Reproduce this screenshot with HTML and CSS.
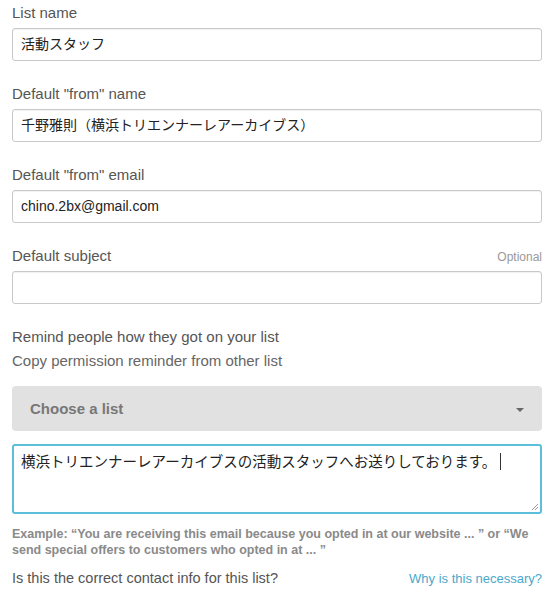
FILE: index.html
```html
<!DOCTYPE html>
<html lang="ja">
<head>
<meta charset="utf-8">
<link rel="stylesheet" href="styles.css">
</head>
<body>
<form class="form">
  <div class="field">
    <div class="label-row"><label class="label">List name</label></div>
    <div class="input">活動スタッフ</div>
  </div>
  <div class="field">
    <div class="label-row"><label class="label">Default "from" name</label></div>
    <div class="input">千野雅則（横浜トリエンナーレアーカイブス）</div>
  </div>
  <div class="field">
    <div class="label-row"><label class="label">Default "from" email</label></div>
    <div class="input">chino.2bx@gmail.com</div>
  </div>
  <div class="field">
    <div class="label-row"><label class="label">Default subject</label><span class="optional">Optional</span></div>
    <div class="input"></div>
  </div>
  <div class="remind">
    <div class="remind-title">Remind people how they got on your list</div>
    <div class="remind-sub">Copy permission reminder from other list</div>
    <div class="select"><span>Choose a list</span><span class="caret"></span></div>
    <div class="textarea">横浜トリエンナーレアーカイブスの活動スタッフへお送りしております。<span class="cursor"></span>
      <svg class="grip" width="8" height="8" viewBox="0 0 8 8"><path d="M7 1L1 7M7 4L4 7" stroke="#999" stroke-width="1" fill="none"/></svg>
    </div>
    <p class="example">Example: “You are receiving this email because you opted in at our website ... ” or “We send special offers to customers who opted in at ... ”</p>
  </div>
  <div class="contact">
    <span class="contact-q">Is this the correct contact info for this list?</span>
    <a class="why">Why is this necessary?</a>
  </div>
</form>
</body>
</html>
```

FILE: styles.css
```css
* { box-sizing: border-box; }
html, body { margin: 0; padding: 0; background: #fff; }
body {
  font-family: "Liberation Sans", Arial, "Noto Sans CJK JP", sans-serif;
  color: #555;
}
.form {
  width: 530px;
  margin-left: 12px;
  padding-top: 5px;
}
.field { margin-bottom: 25px; }
.label-row {
  display: flex;
  justify-content: space-between;
  align-items: baseline;
  height: 16px;
  margin-bottom: 7px;
}
.label {
  font-size: 15px;
  line-height: 16px;
  color: #555;
}
.optional {
  font-size: 12px;
  color: #999;
}
.input {
  height: 33px;
  border: 1px solid #c9c9c9;
  border-radius: 3px;
  box-shadow: inset 0 1px 1px rgba(0,0,0,0.06);
  padding: 0 8px;
  font-size: 14px;
  line-height: 31px;
  color: #222;
  white-space: nowrap;
  overflow: hidden;
}
.remind-title {
  font-size: 15px;
  line-height: 16px;
  color: #555;
}
.remind-sub {
  margin-top: 8px;
  font-size: 15px;
  line-height: 16px;
  color: #666;
}
.select {
  margin-top: 17px;
  height: 45px;
  background: #e1e1e1;
  border-radius: 4px;
  display: flex;
  align-items: center;
  justify-content: space-between;
  padding: 0 18px;
  font-size: 15px;
  font-weight: bold;
  color: #777;
}
.caret {
  width: 0;
  height: 0;
  border-left: 4px solid transparent;
  border-right: 4px solid transparent;
  border-top: 4px solid #666;
  margin-top: 2px;
}
.textarea {
  position: relative;
  margin-top: 13px;
  height: 70px;
  border: 2px solid #5bbfdb;
  border-radius: 3px;
  padding: 6px 7px;
  font-size: 14.5px;
  line-height: 20px;
  color: #222;
  white-space: nowrap;
}
.cursor {
  display: inline-block;
  width: 1px;
  height: 17px;
  background: #333;
  vertical-align: -3px;
  margin-left: 4px;
}
.grip {
  position: absolute;
  right: 1px;
  bottom: 1px;
}
.example {
  margin: 12px 0 0 0;
  font-size: 12.5px;
  line-height: 16px;
  font-weight: bold;
  color: #8a8a8a;
}
.contact {
  margin-top: 12px;
  display: flex;
  justify-content: space-between;
  align-items: baseline;
}
.contact-q {
  font-size: 14.5px;
  color: #555;
}
.why {
  font-size: 13px;
  color: #4aa8cc;
}
```
